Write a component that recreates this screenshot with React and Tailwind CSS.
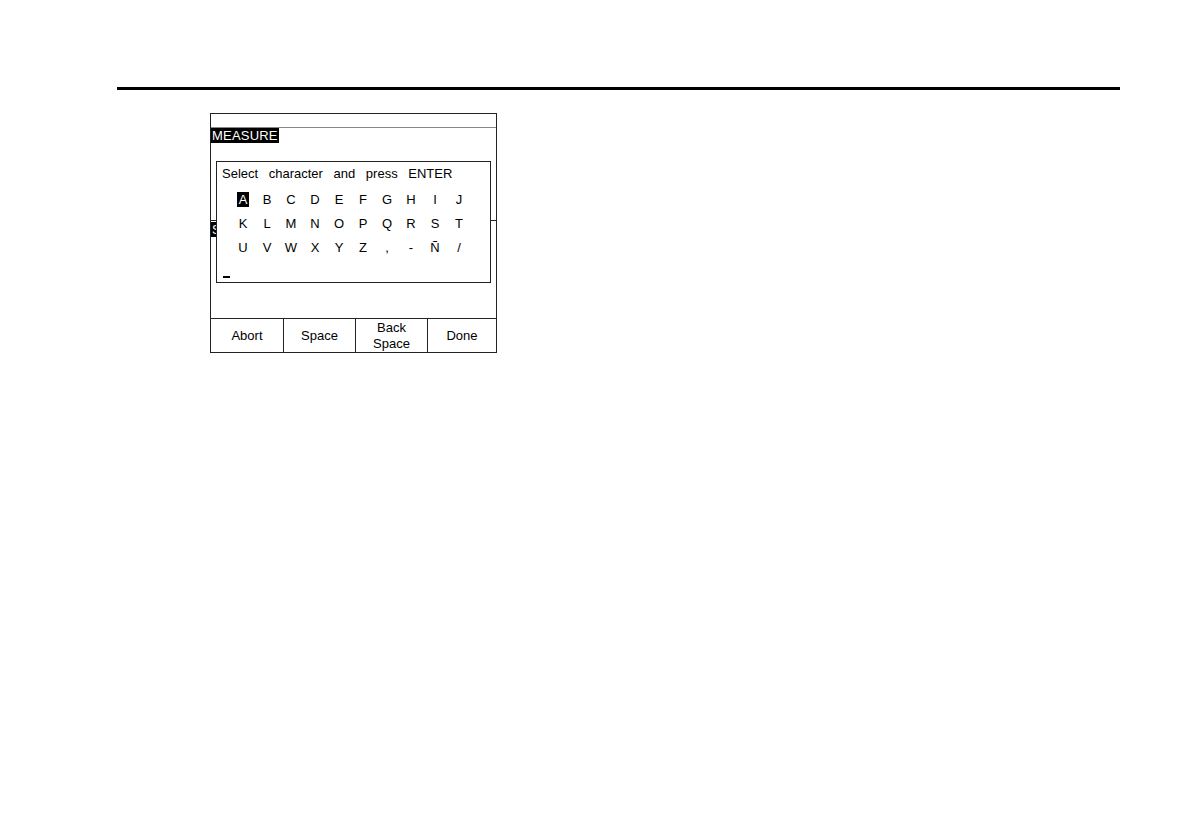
import React from 'react';

const ROWS = [
    ['A', 'B', 'C', 'D', 'E', 'F', 'G', 'H', 'I', 'J'],
    ['K', 'L', 'M', 'N', 'O', 'P', 'Q', 'R', 'S', 'T'],
    ['U', 'V', 'W', 'X', 'Y', 'Z', ',', '-', 'Ñ', '/'],
];

const SoftKey = ({ children, last }) => (
    <div className={`flex items-center justify-center text-center leading-[16px] ${last ? '' : 'border-r border-[#222]'}`}>
        {children}
    </div>
);

const App = () => {
    return (
        <div className="w-[1188px] h-[828px] bg-white text-black font-['Liberation_Sans',Arial,sans-serif] text-[13px] overflow-hidden">
            {/* page rule */}
            <div className="mt-[87px] ml-[117px] w-[1003px] h-[3px] bg-black" />

            {/* instrument screen */}
            <div className="relative mt-[23px] ml-[210px] w-[287px] h-[240px] border border-[#222] flex flex-col">
                {/* top status band */}
                <div className="h-[14px] border-b border-[#888]" />

                <div className="flex">
                    <div className="h-[15px] w-[68px] bg-black text-white leading-[15px] pl-[1px] tracking-[0.2px]">MEASURE</div>
                </div>

                {/* underlying menu, mostly hidden by the dialog */}
                <div className="mt-[77px] border-t border-[#222]" />
                <div className="mt-[1px] flex">
                    <div className="h-[15px] w-[5px] overflow-hidden bg-black text-white leading-[15px] pl-[1px]">S</div>
                </div>

                {/* soft keys */}
                <div className="mt-auto h-[34px] border-t border-[#222] grid grid-cols-[73px_72px_72px_1fr]">
                    <SoftKey>Abort</SoftKey>
                    <SoftKey>Space</SoftKey>
                    <SoftKey>Back<br />Space</SoftKey>
                    <SoftKey last>Done</SoftKey>
                </div>

                {/* character picker dialog */}
                <div className="absolute left-[5px] top-[47px] w-[275px] h-[122px] border border-[#222] bg-white flex flex-col">
                    <div className="h-[24px] leading-[24px] pl-[5px] [word-spacing:7px]">Select character and press ENTER</div>
                    <div className="pl-[14px] pt-[1px]">
                        {ROWS.map((row, r) => (
                            <div key={r} className="flex h-[24px] items-center">
                                {row.map((ch, c) => (
                                    <div key={c} className="w-[24px] flex justify-center">
                                        {r === 0 && c === 0 ? (
                                            <span className="w-[12px] h-[15px] bg-black text-white leading-[15px] text-center">{ch}</span>
                                        ) : (
                                            <span className="leading-[15px]">{ch}</span>
                                        )}
                                    </div>
                                ))}
                            </div>
                        ))}
                    </div>
                    <div className="mt-auto mb-[4px] ml-[6px] w-[7px] h-[2px] bg-black" />
                </div>
            </div>
        </div>
    );
};

export default App;
